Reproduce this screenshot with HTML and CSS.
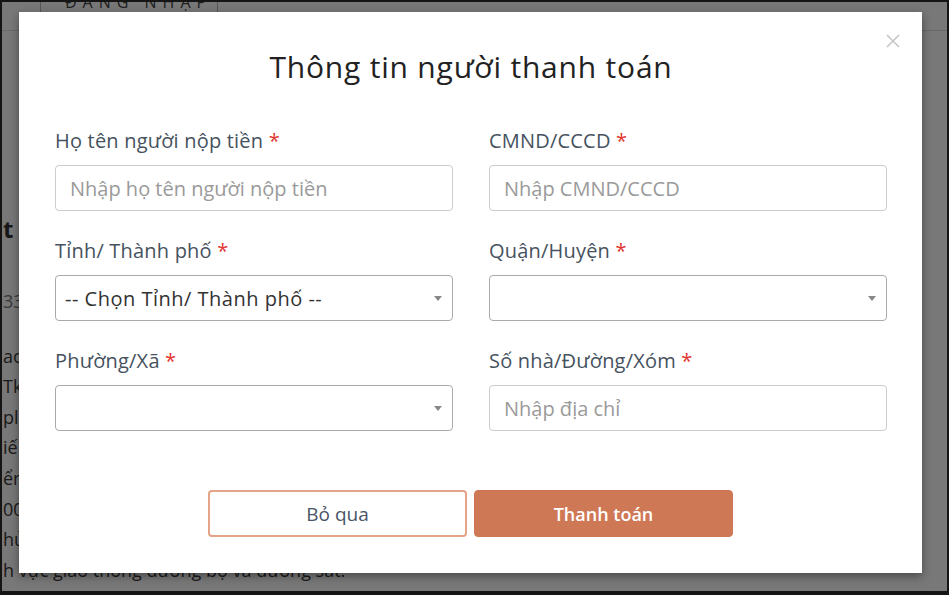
FILE: index.html
```html
<!DOCTYPE html>
<html lang="vi">

<head>
    <meta charset="UTF-8">
    <meta name="viewport" content="width=device-width, initial-scale=1.0">
    <title>Thông tin người thanh toán</title>
    <link rel="stylesheet" href="styles.css">
</head>

<body>
    <div class="screen">
        <!-- Trang phía sau modal -->
        <div class="page">
            <div class="page-header">
                <div class="header-box">ĐĂNG NHẬP</div>
            </div>
            <div class="page-body">
                <p class="page-title">t</p>
                <p class="page-meta">33</p>
                <p>ao</p>
                <p>Tk</p>
                <p>pl</p>
                <p>iế</p>
                <p>ển</p>
                <p>00</p>
                <p>hủ</p>
                <p>h vực giao thông đường bộ và đường sắt.</p>
            </div>
        </div>

        <div class="backdrop"></div>

        <div class="modal">
            <button class="modal-close" type="button" aria-label="Đóng">
                <svg width="14" height="14" viewBox="0 0 14 14">
                    <path d="M1 1 L13 13 M13 1 L1 13" stroke="#c6c6c6" stroke-width="1.6" fill="none"/>
                </svg>
            </button>

            <h2 class="modal-title">Thông tin người thanh toán</h2>

            <form class="payer-form">
                <div class="form-grid">
                    <div class="form-group">
                        <label>Họ tên người nộp tiền <span class="req">*</span></label>
                        <input class="form-control" type="text" placeholder="Nhập họ tên người nộp tiền">
                    </div>
                    <div class="form-group">
                        <label>CMND/CCCD <span class="req">*</span></label>
                        <input class="form-control" type="text" placeholder="Nhập CMND/CCCD">
                    </div>
                    <div class="form-group">
                        <label>Tỉnh/ Thành phố <span class="req">*</span></label>
                        <div class="select-wrap">
                            <select class="form-control">
                                <option>-- Chọn Tỉnh/ Thành phố --</option>
                            </select>
                        </div>
                    </div>
                    <div class="form-group">
                        <label>Quận/Huyện <span class="req">*</span></label>
                        <div class="select-wrap">
                            <select class="form-control">
                                <option></option>
                            </select>
                        </div>
                    </div>
                    <div class="form-group">
                        <label>Phường/Xã <span class="req">*</span></label>
                        <div class="select-wrap">
                            <select class="form-control">
                                <option></option>
                            </select>
                        </div>
                    </div>
                    <div class="form-group">
                        <label>Số nhà/Đường/Xóm <span class="req">*</span></label>
                        <input class="form-control" type="text" placeholder="Nhập địa chỉ">
                    </div>
                </div>

                <div class="form-actions">
                    <button class="btn btn-outline" type="button">Bỏ qua</button>
                    <button class="btn btn-primary" type="button">Thanh toán</button>
                </div>
            </form>
        </div>
    </div>
</body>
</html>
```

FILE: styles.css
```css
body, html {
    margin: 0;
    padding: 0;
    width: 100%;
    height: 100%;
    overflow: hidden;
    background-color: #111;
}

.screen {
    position: relative;
    width: 949px;
    height: 595px;
    box-sizing: border-box;
    border: 2px solid #151515;
    border-bottom-width: 4px;
    overflow: hidden;
    background-color: #fff;
    font-family: "Open Sans", "Noto Sans", sans-serif;
}

/* Trang nền */
.page {
    height: 100%;
    color: #3a3a3a;
}

.page-header {
    height: 28px;
    border-bottom: 1px solid #ddd;
    position: relative;
}

.header-box {
    margin-left: 38px;
    width: 176px;
    height: 10px;
    border: 1px solid #bbb;
    border-top: none;
    overflow: hidden;
    font-size: 16px;
    line-height: 0;
    color: #444;
    text-indent: 24px;
    letter-spacing: 6px;
}

.page-body {
    padding: 183px 0 0 1px;
    font-size: 18px;
    white-space: nowrap;
}

.page-body p {
    margin: 0;
    line-height: 30.6px;
}

.page-body .page-title {
    font-size: 24px;
    font-weight: bold;
    line-height: 30px;
    margin-bottom: 42px;
    color: #333;
}

.page-body .page-meta {
    color: #777;
    margin-bottom: 24px;
}

.backdrop {
    position: absolute;
    inset: 0;
    background-color: rgba(0, 0, 0, 0.53);
}

/* Modal */
.modal {
    position: absolute;
    left: 17px;
    top: 10px;
    width: 903px;
    height: 561px;
    box-sizing: border-box;
    padding: 38px 35px 36px 36px;
    background-color: #fff;
    box-shadow: 0 3px 9px rgba(0, 0, 0, 0.4);
}

.modal-close {
    position: absolute;
    top: 22px;
    right: 22px;
    width: 14px;
    height: 14px;
    padding: 0;
    border: none;
    background: none;
    display: flex;
}

.modal-title {
    margin: 0;
    text-align: center;
    font-family: "Open Sans", sans-serif;
    font-size: 30px;
    line-height: 34px;
    letter-spacing: 0.8px;
    font-weight: normal;
    color: #222;
}

.payer-form {
    margin-top: 45px;
}

.form-grid {
    display: grid;
    grid-template-columns: 398px 398px;
    column-gap: 36px;
    row-gap: 28px;
}

.form-group {
    display: flex;
    flex-direction: column;
    gap: 12px;
}

.form-group label {
    font-size: 20px;
    line-height: 24px;
    letter-spacing: 0.2px;
    color: #46525e;
}

.req {
    color: #e3342f;
}

.form-control {
    height: 46px;
    box-sizing: border-box;
    width: 100%;
    border: 1px solid #ccc;
    border-radius: 4px;
    background-color: #fff;
    font-family: "Open Sans", sans-serif;
    font-size: 20px;
    color: #333;
    padding: 0 14px;
    outline: none;
}

.form-control::placeholder {
    color: #9a9a9a;
}

.select-wrap {
    position: relative;
}

.select-wrap select {
    appearance: none;
    -webkit-appearance: none;
    padding-left: 9px;
    letter-spacing: 0.5px;
    border-color: #aaa;
}

.select-wrap::after {
    content: '';
    position: absolute;
    right: 11px;
    top: 21px;
    border-left: 4px solid transparent;
    border-right: 4px solid transparent;
    border-top: 5px solid #888;
    pointer-events: none;
}

.form-actions {
    margin-top: 59px;
    display: flex;
    justify-content: center;
    gap: 7px;
    padding-right: 1px;
}

.btn {
    width: 259px;
    height: 47px;
    box-sizing: border-box;
    border-radius: 4px;
    font-family: "Open Sans", sans-serif;
    font-size: 19px;
    cursor: pointer;
}

.btn-outline {
    background-color: #fff;
    border: 2px solid #e5a388;
    color: #4a5568;
}

.btn-primary {
    background-color: #cf7856;
    border: 1px solid #cf7856;
    color: #fff;
    font-size: 18px;
    font-weight: 600;
}
```
